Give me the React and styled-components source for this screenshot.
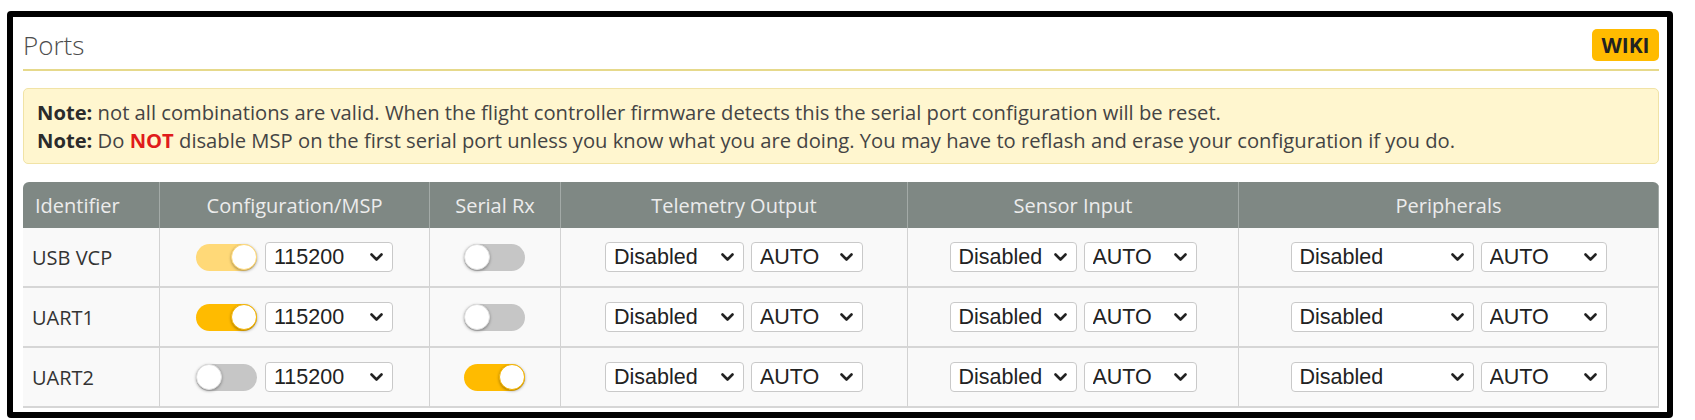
import React from 'react';
import styled, { createGlobalStyle } from 'styled-components';

const GlobalStyle = createGlobalStyle`
  body {
    margin: 0;
    background: #fff;
    font-family: 'Open Sans', 'Liberation Sans', sans-serif;
  }
`;

const Frame = styled.div`
  box-sizing: border-box;
  width: 1666px;
  height: 407px;
  margin: 11px 0 0 7px;
  border: 6px solid #000;
  border-radius: 4px;
  padding: 0 8px 0 10px;
  overflow: hidden;
  background: #fff;
`;

const TitleBar = styled.div`
  display: flex;
  align-items: center;
  justify-content: space-between;
  height: 48px;
  padding-top: 4px;
  border-bottom: 2px solid #e6d98b;
`;

const Title = styled.h1`
  margin: 0;
  font-size: 26px;
  font-weight: 300;
  color: #4d4d4d;
`;

const WikiButton = styled.a`
  display: flex;
  align-items: center;
  justify-content: center;
  width: 67px;
  height: 32px;
  border-radius: 5px;
  background: #ffbb00;
  color: #222;
  font-size: 21px;
  font-weight: 700;
  text-decoration: none;
  box-sizing: border-box;
`;

const NoteBox = styled.div`
  margin-top: 17px;
  padding: 9px 13px;
  border: 1px solid #f1e3a6;
  border-radius: 5px;
  background: #fff6cf;
  color: #444;
  font-size: 20.2px;
  line-height: 28px;
`;

const NoteLine = styled.p`
  margin: 0;
`;

const Strong = styled.b`
  color: ${({ $danger }) => ($danger ? '#e01b1b' : '#2b2b2b')};
`;

const Grid = styled.div`
  display: grid;
  grid-template-columns: 137px 270px 131px 347px 331px 420px;
  margin-top: 18px;
  border-radius: 6px 6px 0 0;
  overflow: hidden;
`;

const HeadCell = styled.div`
  display: flex;
  align-items: center;
  justify-content: ${({ $left }) => ($left ? 'flex-start' : 'center')};
  height: 46px;
  padding-left: ${({ $left }) => ($left ? '12px' : '0')};
  background: #7f8884;
  color: #ececec;
  font-size: 20px;
  border-right: 1px solid #a3aaa7;
  &:last-child {
    border-right: none;
  }
`;

const Cell = styled.div`
  box-sizing: border-box;
  display: flex;
  align-items: center;
  justify-content: ${({ $left }) => ($left ? 'flex-start' : 'center')};
  gap: 7px;
  height: 60px;
  padding-left: ${({ $left }) => ($left ? '9px' : '0')};
  background: #f9f9f9;
  color: #333;
  font-size: 20px;
  border-right: 1px solid #d2d2d2;
  border-bottom: 2px solid #d6d6d6;
  &:first-child {
    border-left: 1px solid #d2d2d2;
  }
`;

const Track = styled.span`
  position: relative;
  display: inline-block;
  flex-shrink: 0;
  width: 61px;
  height: 27px;
  margin-right: 1px;
  border-radius: 14px;
  background: ${({ $on, $faded }) =>
    $on ? ($faded ? '#ffd978' : '#ffbb00') : '#c6c6c6'};
`;

const Knob = styled.span`
  position: absolute;
  top: 0;
  left: ${({ $on }) => ($on ? '35px' : '0')};
  width: 26px;
  height: 26px;
  border-radius: 50%;
  background: #fff;
  box-shadow: 0 1px 3px rgba(0, 0, 0, 0.35);
  border: ${({ $on, $faded }) =>
    $on ? `1px solid ${$faded ? '#ffd978' : '#f5b400'}` : '1px solid #e0e0e0'};
  box-sizing: border-box;
`;

const SelectWrap = styled.span`
  position: relative;
  display: inline-block;
  width: ${({ $w }) => $w}px;
  height: 30px;
`;

const NativeSelect = styled.select`
  appearance: none;
  box-sizing: border-box;
  width: 100%;
  height: 100%;
  padding: 0 0 0 8px;
  border: 1px solid #c9c9c9;
  border-radius: 4px;
  background: #fff;
  color: #222;
  font-family: 'Liberation Sans', Arial, sans-serif;
  font-size: 21.5px;
  outline: none;
`;

const Chevron = styled.svg`
  position: absolute;
  right: 10px;
  top: 11px;
  pointer-events: none;
`;

const Toggle = ({ on, faded }) => (
  <Track $on={on} $faded={faded}>
    <Knob $on={on} $faded={faded} />
  </Track>
);

const Select = ({ value, width, options }) => (
  <SelectWrap $w={width}>
    <NativeSelect defaultValue={value}>
      {(options || [value]).map((o) => (
        <option key={o}>{o}</option>
      ))}
    </NativeSelect>
    <Chevron width="13" height="9" viewBox="0 0 13 9">
      <polyline
        points="1.5,1.5 6.5,6.5 11.5,1.5"
        fill="none"
        stroke="#222"
        strokeWidth="2.6"
        strokeLinecap="round"
        strokeLinejoin="round"
      />
    </Chevron>
  </SelectWrap>
);

const HEADERS = [
  'Identifier',
  'Configuration/MSP',
  'Serial Rx',
  'Telemetry Output',
  'Sensor Input',
  'Peripherals',
];

const PORTS = [
  { id: 'USB VCP', msp: true, faded: true, rx: false },
  { id: 'UART1', msp: true, faded: false, rx: false },
  { id: 'UART2', msp: false, faded: false, rx: true },
];

const App = () => (
  <>
    <GlobalStyle />
    <Frame>
      <TitleBar>
        <Title>Ports</Title>
        <WikiButton href="#">WIKI</WikiButton>
      </TitleBar>
      <NoteBox>
        <NoteLine>
          <Strong>Note:</Strong> not all combinations are valid. When the flight
          controller firmware detects this the serial port configuration will be
          reset.
        </NoteLine>
        <NoteLine>
          <Strong>Note:</Strong> Do <Strong $danger>NOT</Strong> disable MSP on
          the first serial port unless you know what you are doing. You may have
          to reflash and erase your configuration if you do.
        </NoteLine>
      </NoteBox>
      <Grid>
        {HEADERS.map((h, i) => (
          <HeadCell key={h} $left={i === 0}>
            {h}
          </HeadCell>
        ))}
        {PORTS.map((p) => (
          <React.Fragment key={p.id}>
            <Cell $left>{p.id}</Cell>
            <Cell>
              <Toggle on={p.msp} faded={p.faded} />
              <Select value="115200" width={128} />
            </Cell>
            <Cell>
              <Toggle on={p.rx} />
            </Cell>
            <Cell>
              <Select value="Disabled" width={139} />
              <Select value="AUTO" width={112} />
            </Cell>
            <Cell>
              <Select value="Disabled" width={127} />
              <Select value="AUTO" width={113} />
            </Cell>
            <Cell>
              <Select value="Disabled" width={183} />
              <Select value="AUTO" width={126} />
            </Cell>
          </React.Fragment>
        ))}
      </Grid>
    </Frame>
  </>
);

export default App;
